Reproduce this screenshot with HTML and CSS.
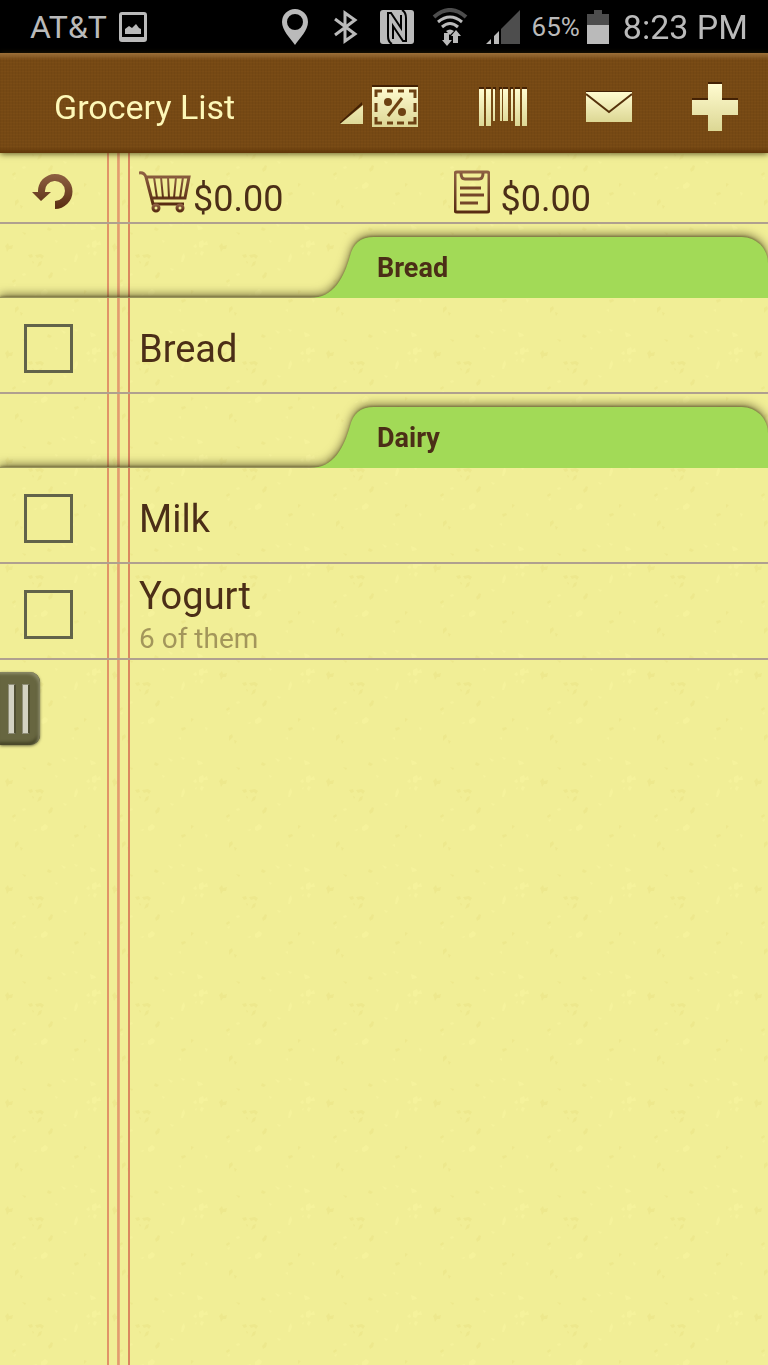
FILE: index.html
```html
<!DOCTYPE html>
<html lang="en">
    <head>
        <meta charset="utf-8">
        <meta name="viewport" content="width=device-width, initial-scale=1">
        <title>Grocery List</title>
        <link rel="stylesheet" href="styles.css">
    </head>
    <body>
        <!--Paper grain, plus the gradients shared by the icons-->
        <svg class="paper" aria-hidden="true">
            <defs>
                <pattern id="grain" width="107" height="107" patternUnits="userSpaceOnUse">
                    <g fill="#ede88d">
                        <path d="M5 32l3-3 1 3 4-1-1 4-3 0-2 3-1-4zM28 41l4-1 1 3-3 1zM35 41l6-1 3 2-2 3-2-2-3 1zM39 48l3-1-1 4-4 2zM32 47l2 1-1 2zM15 94l3-2 1 3-4 4zM20 98l3 1-2 3zM48 62l2-2 1-2 2 1-1 4-3 2zM48 13l4 2-2 2-3-1zM22 18l4 1-1 2zM74 86l4-1 1 2-4 2zM84 76l3 1-3 3zM12 67l3-2 1 2-3 2z"/>
                    </g>
                    <g fill="#f5f29b">
                        <path d="M90 11l5 2 1 2-5 1zM86 32l3-2 1 3-2 1zM92 28l4-2 1 3 3-2 1 4-4 0-2 3-3-1zM94 37l3 1-2 4-2-2zM88 39l2-1-1 3zM75 42l2-3 1 4-2 5-2 0zM41 78l4-3 3 2-1 3-4 2-2-1zM33 81l4-1-1 2zM63 54l4 1-2 2zM13 71l3-1-1 3zM61 9l5 2-2 2zM74 8l4 1-2 2zM98 85l3 1-2 3zM71 96l3-1v3zM22 60l3-1 1 2-3 1zM55 26l3 1-2 2z"/>
                    </g>
                </pattern>
                <linearGradient id="cream" x1="0" y1="0" x2="0" y2="1">
                    <stop offset="0" stop-color="#fffbd0"/>
                    <stop offset="1" stop-color="#dcd794"/>
                </linearGradient>
                <linearGradient id="cocoa" x1="0" y1="0" x2="0" y2="1">
                    <stop offset="0" stop-color="#8e6042"/>
                    <stop offset="1" stop-color="#582c12"/>
                </linearGradient>
            </defs>
            <rect width="100%" height="100%" fill="url(#grain)"/>
        </svg>

        <div class="status-bar">
            <span class="carrier">AT&amp;T</span>
            <svg class="picture" width="28" height="30" viewBox="0 0 28 30">
                <path fill="#bababa" fill-rule="evenodd" d="M3 0h22q3 0 3 3v24q0 3-3 3H3q-3 0-3-3V3q0-3 3-3zM3 3v22h22V3zM6 22v-5l4-3 3 2 4-4 3 4 2 1v5z"/>
            </svg>
            <div class="indicators">
                <svg width="26" height="36" viewBox="0 0 26 36">
                    <path fill="#bababa" fill-rule="evenodd" d="M13 0a13 13 0 0 1 13 13c0 8-8 16-13 23C8 29 0 21 0 13A13 13 0 0 1 13 0zm0 5a8 8 0 1 0 0 16 8 8 0 0 0 0-16z"/>
                </svg>
                <svg width="36" height="34" viewBox="0 0 36 34">
                    <path fill="none" stroke="#bababa" stroke-width="3" d="M9 9l20 15-10 7V3l10 7L9 25"/>
                </svg>
                <svg width="34" height="34" viewBox="0 0 34 34">
                    <rect width="34" height="34" rx="3" fill="#bababa"/>
                    <path fill="none" stroke="#000" stroke-width="2" d="M12 34C8 32 8 29 8 26V3h3l10 15V5M22 0c4 2 4 5 4 8v23h-3L13 16v13"/>
                </svg>
                <svg width="36" height="38" viewBox="0 0 36 38">
                    <path fill="none" stroke="#4d4d4d" stroke-width="4" d="M2 9q16-14 32 0"/>
                    <path fill="none" stroke="#bababa" stroke-width="3" d="M6 14q12-10 24 0M10 19q8-7 16 0"/>
                    <path fill="#bababa" d="M14 23q4-3 8 0l-4 4zM12 25h5v7h3l-5 6-5-6h2zM21 35h5v-7h3l-5-6-5 6h2z"/>
                </svg>
                <svg width="34" height="34" viewBox="0 0 34 34">
                    <path fill="#4d4d4d" d="M15 34V19L34 0v34z"/>
                    <path fill="#bababa" d="M0 34l5-5v5zM8 34v-8l5-5v13z"/>
                </svg>
            </div>
            <span class="percent">65%</span>
            <svg class="battery" width="22" height="34" viewBox="0 0 22 34">
                <path fill="#4d4d4d" d="M7 0h8v4h7v11H0V4h7z"/>
                <path fill="#bababa" d="M0 15h22v19H0z"/>
            </svg>
            <span class="clock">8:23 PM</span>
        </div>

        <header class="title-bar">
            <h1 class="title">Grocery List</h1>
            <div class="actions">
                <button class="action coupons" aria-label="Coupons">
                    <svg width="78" height="44" viewBox="0 0 78 44">
                        <path fill="#432104" d="M0 37L22 17v3L0 39zM32 0h46v3H32z"/>
                        <path fill="url(#cream)" d="M0 39L23 20v19zM32 2h46v40H32z"/>
                        <g fill="none" stroke="#6d4213" stroke-width="3">
                            <path d="M36 12V6h6M47 6h6M58 6h6M69 6h6v7M75 18v9M75 32v6h-7M64 38h-7M53 38h-6M42 38h-6v-6M36 27v-9"/>
                            <path d="M48 31L62 13"/>
                        </g>
                        <circle cx="48" cy="17" r="4" fill="#6d4213"/>
                        <circle cx="62" cy="27" r="4" fill="#6d4213"/>
                    </svg>
                </button>
                <button class="action" aria-label="Scan barcode">
                    <svg width="48" height="40" viewBox="0 0 48 40">
                        <path fill="#432104" d="M0 0h5v3H0zM7 0h5v3H7zM14 0h3v3h-3zM20 0h3v3h-3zM24 0h5v3h-5zM31 0h3v3h-3zM36 0h5v3h-5zM43 0h5v3h-5z"/>
                        <path fill="url(#cream)" d="M0 2h5v37H0zM7 2h5v37H7zM14 2h2v32h-2zM21 2h2v32h-2zM24 2h5v32h-5zM32 2h2v32h-2zM36 2h5v37h-5zM43 2h5v37h-5z"/>
                    </svg>
                </button>
                <button class="action" aria-label="Send list">
                    <svg width="46" height="32" viewBox="0 0 46 32">
                        <path fill="#432104" d="M0 0h46v3H0z"/>
                        <path fill="url(#cream)" d="M0 1h46v30H0z"/>
                        <path fill="none" stroke="#55310b" stroke-width="2" d="M0 3l23 18L46 3"/>
                    </svg>
                </button>
                <button class="action" aria-label="Add item">
                    <svg width="46" height="50" viewBox="0 0 46 50">
                        <path fill="#432104" d="M16 0h14v16h16v4H0v-4h16z"/>
                        <path fill="url(#cream)" d="M16 2h14v16h16v15H30v16H16V33H0V18h16z"/>
                    </svg>
                </button>
            </div>
        </header>

        <main class="notepad">
            <div class="totals">
                <button class="undo" aria-label="Undo">
                    <svg width="42" height="36" viewBox="0 0 42 36">
                        <path fill="url(#cocoa)" d="M23 0a17 17 0 0 1 0 35v-8a10 10 0 1 0-10-9h6L9 27 0 18h6A17 17 0 0 1 23 0z"/>
                    </svg>
                </button>
                <div class="total">
                    <svg width="52" height="42" viewBox="0 0 52 42">
                        <g fill="none" stroke="url(#cocoa)" stroke-width="3">
                            <path d="M0 2q5-1 7 4h43l-4 21H12M7 6l7 27h31M13 29l1 4"/>
                            <path stroke-width="2" d="M15 6l3 21M22 6l2 21M29 6l1 21M37 6l-2 21M44 6l-3 21"/>
                            <circle cx="17" cy="37" r="3"/>
                            <circle cx="41" cy="37" r="3"/>
                        </g>
                    </svg>
                    <span>$0.00</span>
                </div>
                <div class="total planned">
                    <svg width="36" height="44" viewBox="0 0 36 44">
                        <rect x="1" y="2" width="34" height="40" rx="2" fill="none" stroke="url(#cocoa)" stroke-width="3"/>
                        <path fill="none" stroke="#83583b" stroke-width="3" d="M7 3q0 6 4 6h14q4 0 4-6"/>
                        <path fill="none" stroke="#744628" stroke-width="3" d="M6 18h21M6 25h24M6 33h18"/>
                    </svg>
                    <span>$0.00</span>
                </div>
            </div>

            <section>
                <div class="aisle">
                    <div class="aisle-edge"></div>
                    <svg class="tab-curve" width="64" height="61" viewBox="0 0 64 61">
                        <path fill="#a2da57" d="M64 0C50 0 43 7 40 19C34 40 24 61 0 61H64z"/>
                    </svg>
                    <h2 class="tab-name">Bread</h2>
                </div>
                <label class="item">
                    <input type="checkbox" class="tick">
                    <span class="name">Bread</span>
                </label>
            </section>

            <section>
                <div class="aisle">
                    <div class="aisle-edge"></div>
                    <svg class="tab-curve" width="64" height="61" viewBox="0 0 64 61">
                        <path fill="#a2da57" d="M64 0C50 0 43 7 40 19C34 40 24 61 0 61H64z"/>
                    </svg>
                    <h2 class="tab-name">Dairy</h2>
                </div>
                <label class="item">
                    <input type="checkbox" class="tick">
                    <span class="name">Milk</span>
                </label>
                <label class="item">
                    <input type="checkbox" class="tick">
                    <span class="name">Yogurt <small class="note">6 of them</small></span>
                </label>
            </section>

            <button class="drawer-handle" aria-label="Open lists">
                <span class="grip"></span>
                <span class="grip"></span>
            </button>
        </main>
    </body>
</html>
```

FILE: styles.css
```css
html {
    box-sizing: border-box;
    background-color: #f1ee96;
}

*, *:before, *:after {
    box-sizing: inherit;
}

body {
    display: flex;
    flex-direction: column;
    min-height: 100vh;
    margin: 0;
    font-family: Roboto, "Liberation Sans", sans-serif;
    color: #4b2e17;
}

button {
    margin: 0;
    padding: 0;
    border: none;
    background: none;
    cursor: pointer;
}

svg {
    display: block;
    flex: none;
}

.paper {
    position: fixed;
    z-index: -1;
    top: 0;
    left: 0;
    width: 100%;
    height: 100%;
}

/*Phone status bar*/
.status-bar {
    display: flex;
    align-items: center;
    height: 53px;
    padding: 0 20px 0 30px;
    background-color: #000;
    color: #bababa;
}

.carrier {
    font-size: 32px;
}

.picture {
    margin-left: 12px;
}

.indicators {
    display: flex;
    align-items: center;
    gap: 18px;
    margin-left: auto;
}

.percent {
    margin-left: 12px;
    font-size: 26px;
}

.battery {
    margin-left: 7px;
}

.clock {
    margin-left: 14px;
    font-size: 34px;
}

/*Leather bar with the list name and its actions*/
.title-bar {
    position: relative;
    display: flex;
    align-items: center;
    justify-content: space-between;
    height: 100px;
    padding-left: 54px;
    padding-top: 7px;
    background-color: #764914;
    background-image:
        linear-gradient(to bottom, #9c7039 0, rgba(116,71,19,0) 7px, rgba(116,71,19,0) 94px, #603607 100px),
        repeating-linear-gradient(90deg, rgba(50,25,0,0.06) 0, rgba(50,25,0,0.06) 1px, transparent 1px, transparent 3px),
        repeating-linear-gradient(0deg, rgba(170,110,40,0.08) 0, rgba(170,110,40,0.08) 1px, transparent 1px, transparent 3px);
    box-shadow: 0 1px 6px rgba(60,50,10,0.8);
}

.title {
    margin: 0;
    font-size: 34px;
    font-weight: normal;
    color: #fdf8b8;
}

.actions {
    display: flex;
}

.action {
    display: flex;
    align-items: center;
    justify-content: center;
    width: 106px;
    height: 93px;
}

.coupons {
    justify-content: flex-end;
    padding-right: 32px;
}

/*The three red margin lines run the full height of the page*/
.notepad {
    flex: 1;
    background-image: linear-gradient(to right,
        transparent 107px, #e09468 107px, #e09468 109px, transparent 109px,
        transparent 117px, #e8b581 117px, #e09468 118px, #e8b581 120px, transparent 120px,
        transparent 128px, #da8860 128px, #da8860 130px, transparent 130px);
}

.totals {
    display: flex;
    height: 71px;
    padding-left: 32px;
    padding-top: 8px;
    border-bottom: 2px solid #b0a08f;
    font-size: 36px;
}

.undo {
    width: 107px;
}

.total {
    display: flex;
    flex: 1;
    align-items: center;
    gap: 2px;
}

.total span {
    padding-top: 14px;
}

.planned {
    gap: 11px;
}

/*Aisle headings, drawn as folder tabs. The edge hangs just below the
row and is cut off, so that only its shadow shows on the paper*/
.aisle {
    display: flex;
    height: 74px;
    padding-top: 13px;
    clip-path: inset(0);
    filter: drop-shadow(0 -1px 1px rgba(60,50,20,0.4)) drop-shadow(0 -2px 5px rgba(60,50,20,0.65));
}

.aisle-edge {
    width: 326px;
    height: 20px;
    margin-top: 60px;
    margin-right: -16px;
    background-color: #97935c;
}

.tab-name {
    flex: 1;
    margin: 0;
    padding-left: 3px;
    border-radius: 0 26px 0 0;
    background-color: #a2da57;
    font-size: 27px;
    font-weight: bold;
    line-height: 63px;
}

.tab-curve {
    position: relative;
}

.item {
    display: flex;
    align-items: center;
    height: 96px;
    padding-left: 24px;
    padding-top: 6px;
    border-bottom: 2px solid #b0a08f;
}

.tick {
    appearance: none;
    -webkit-appearance: none;
    width: 49px;
    height: 49px;
    margin: 0 66px 0 0;
    border: 3px solid #62634a;
}

.tick:checked {
    background-color: #62634a;
}

.name {
    padding-top: 2px;
    font-size: 38px;
    line-height: 48px;
}

.note {
    display: block;
    font-size: 28px;
    line-height: 38px;
    color: #a3965b;
}

.drawer-handle {
    display: flex;
    align-items: center;
    gap: 6px;
    width: 40px;
    height: 73px;
    margin-top: 12px;
    padding-left: 8px;
    border-radius: 0 10px 10px 0;
    background-color: #676640;
    box-shadow: inset -2px 2px 3px #8b8a68, inset -2px -3px 3px #484728, 0 1px 3px #6f6d43;
}

.grip {
    width: 8px;
    height: 50px;
    border: 1px solid #8f8e78;
    border-right: 2px solid #504f33;
    background-color: #d3d2c2;
}
```
